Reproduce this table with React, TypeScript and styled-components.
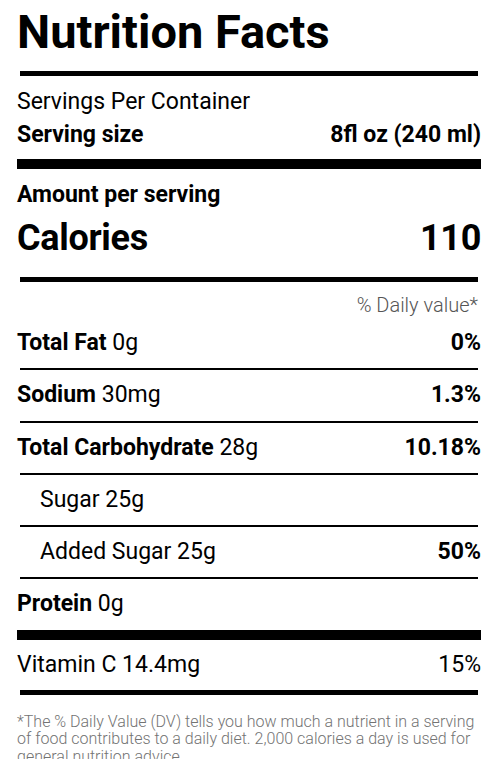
import React, { FunctionComponent } from "react";
import styled, { createGlobalStyle } from "styled-components";

const GlobalStyle = createGlobalStyle`
  html, body {
    margin: 0;
    padding: 0;
    background: #fff;
  }
  body {
    font-family: Roboto, "Noto Sans", sans-serif;
    color: #000;
    overflow: hidden;
  }
`;

const Label = styled.section`
  width: 464px;
  padding-left: 17px;
  height: 759px;
  overflow: hidden;
`;

const Title = styled.h1`
  margin: 0 0 8px;
  font-size: 47px;
  font-weight: 700;
  line-height: 63px;
`;

type RuleProps = { $size: "thin" | "medium" | "thick" };

const Rule = styled.div<RuleProps>`
  background: #000;
  height: ${(p) => (p.$size === "thick" ? "10px" : p.$size === "medium" ? "5px" : "2px")};
  margin: 0 ${(p) => (p.$size === "thick" ? "0" : "3px")};
`;

const InfoRow = styled.div<{ $gapTop?: number }>`
  display: flex;
  justify-content: space-between;
  font-size: 23px;
  line-height: 33px;
  margin-top: ${(p) => p.$gapTop ?? 0}px;
`;

const Bold = styled.span`
  font-weight: 700;
`;

const CaloriesRow = styled.div`
  display: flex;
  justify-content: space-between;
  font-size: 36px;
  font-weight: 700;
  letter-spacing: -0.3px;
  line-height: 54px;
  margin-bottom: 12px;
`;

const DailyHeader = styled.div`
  text-align: right;
  padding: 10px 3px 0 0;
  font-size: 20px;
  font-weight: 300;
  line-height: 26px;
  color: #555;
`;

const NutrientRow = styled.div<{ $indent?: boolean }>`
  display: flex;
  justify-content: space-between;
  height: 50.25px;
  line-height: 50px;
  font-size: 23px;
  padding-left: ${(p) => (p.$indent ? "23px" : "0")};
`;

const VitaminRow = styled.div`
  display: flex;
  justify-content: space-between;
  font-size: 23px;
  line-height: 50px;
`;

const Footnote = styled.p`
  margin: 18px 0 0;
  font-size: 16px;
  font-weight: 300;
  line-height: 17.5px;
  color: #737373;
`;

type Nutrient = {
  name: string;
  amount: string;
  dv?: string;
  bold?: boolean;
  indent?: boolean;
};

const nutrients: Nutrient[] = [
  { name: "Total Fat", amount: "0g", dv: "0%", bold: true },
  { name: "Sodium", amount: "30mg", dv: "1.3%", bold: true },
  { name: "Total Carbohydrate", amount: "28g", dv: "10.18%", bold: true },
  { name: "Sugar", amount: "25g", indent: true },
  { name: "Added Sugar", amount: "25g", dv: "50%", indent: true },
  { name: "Protein", amount: "0g", bold: true },
];

const App: FunctionComponent = () => {
  return (
    <>
      <GlobalStyle />
      <Label>
        <Title>Nutrition Facts</Title>
        <Rule $size="medium" />
        <InfoRow $gapTop={9}>
          <span>Servings Per Container</span>
        </InfoRow>
        <InfoRow>
          <Bold>Serving size</Bold>
          <Bold>8fl oz (240 ml)</Bold>
        </InfoRow>
        <Rule $size="thick" style={{ marginTop: 8 }} />
        <InfoRow $gapTop={9}>
          <Bold>Amount per serving</Bold>
        </InfoRow>
        <CaloriesRow>
          <span>Calories</span>
          <span>110</span>
        </CaloriesRow>
        <Rule $size="medium" />
        <DailyHeader>% Daily value*</DailyHeader>
        {nutrients.map((n, i) => (
          <React.Fragment key={n.name}>
            {i > 0 && <Rule $size="thin" />}
            <NutrientRow $indent={n.indent}>
              <span>
                {n.bold ? <Bold>{n.name}</Bold> : n.name} {n.amount}
              </span>
              {n.dv && <Bold>{n.dv}</Bold>}
            </NutrientRow>
          </React.Fragment>
        ))}
        <Rule $size="thick" />
        <VitaminRow>
          <span>Vitamin C 14.4mg</span>
          <span>15%</span>
        </VitaminRow>
        <Rule $size="medium" />
        <Footnote>
          *The % Daily Value (DV) tells you how much a nutrient in a serving of food
          contributes to a daily diet. 2,000 calories a day is used for general
          nutrition advice.
        </Footnote>
      </Label>
    </>
  );
};

export default App;
